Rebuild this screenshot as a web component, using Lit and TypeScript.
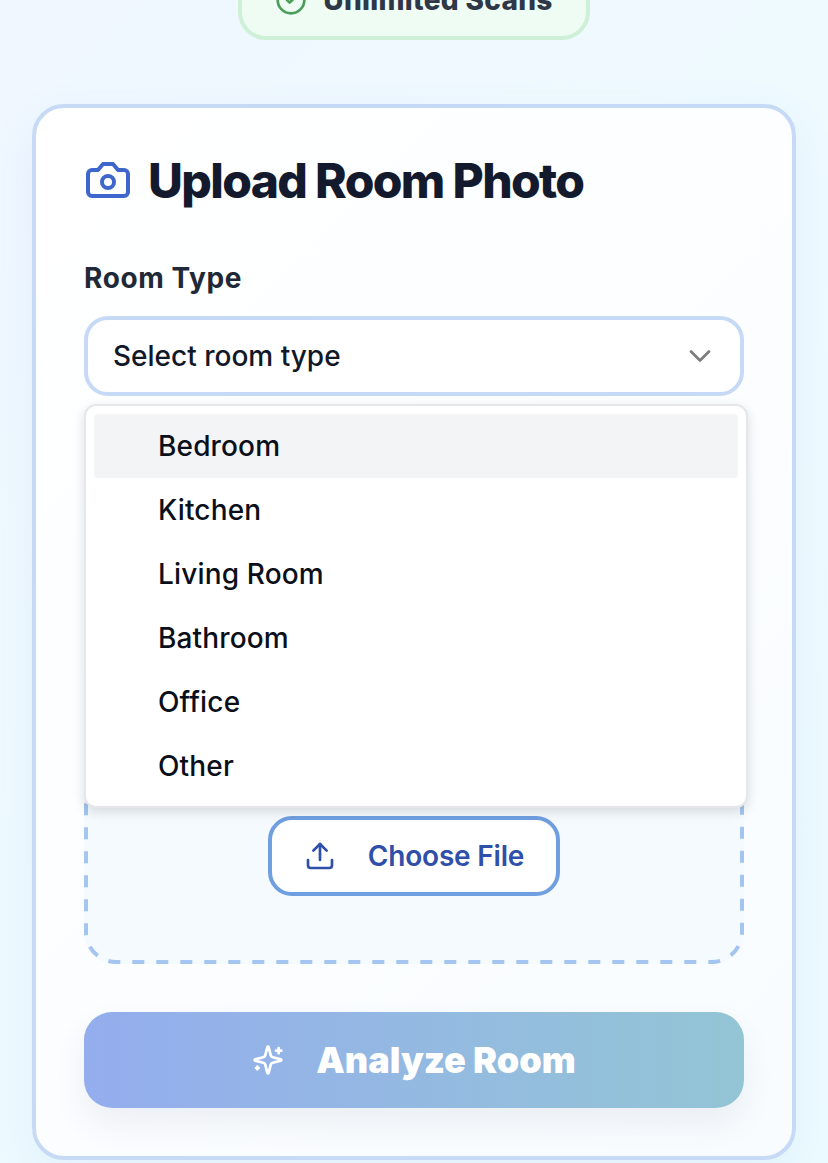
import { LitElement, html, css } from "lit";
import { customElement } from "lit/decorators.js";

const ITEMS = ["Bedroom", "Kitchen", "Living Room", "Bathroom", "Office", "Other"];

@customElement("app-root")
export class AppRoot extends LitElement {
  static styles = css`
    :host {
      display: block;
      height: 1163px;
      overflow: hidden;
      font-family: Inter, "Liberation Sans", sans-serif;
      background: linear-gradient(135deg, #f0f7ff 0%, #eefaff 50%, #ecfbff 100%);
    }
    * { box-sizing: border-box; }
    .page {
      display: flex;
      flex-direction: column;
      align-items: center;
      padding: 0 32px;
    }
    .badge {
      margin-top: -40px;
      width: 352px;
      height: 80px;
      border: 4px solid #cdf0d6;
      border-radius: 28px;
      background: #effcf4;
      display: flex;
      align-items: center;
      justify-content: center;
      gap: 16px;
      color: #2d3748;
      font-size: 28px;
      font-weight: 800;
      letter-spacing: 0.3px;
    }
    .badge svg { width: 32px; height: 32px; flex: none; }
    .card {
      position: relative;
      margin-top: 64px;
      width: 764px;
      height: 1056px;
      border: 4px solid #c7daf5;
      border-radius: 32px;
      background: linear-gradient(135deg, #ffffff 0%, #f8fcff 100%);
      padding: 44px 48px 0;
      box-shadow: 0 16px 48px rgba(90, 130, 200, 0.08);
      display: flex;
      flex-direction: column;
    }
    .card > * { flex: none; }
    .title {
      display: flex;
      align-items: center;
      gap: 16px;
      height: 56px;
      margin: 0;
      color: #141a2e;
      font-size: 48px;
      font-weight: 800;
      letter-spacing: -1.65px;
    }
    .title svg { width: 48px; height: 48px; flex: none; }
    .label {
      margin-top: 54px;
      height: 32px;
      line-height: 32px;
      color: #1f2937;
      font-size: 28px;
      font-weight: 700;
      letter-spacing: 0.6px;
    }
    .select {
      margin-top: 22px;
      height: 80px;
      border: 4px solid #c7daf5;
      border-radius: 24px;
      background: #ffffff;
      display: flex;
      align-items: center;
      justify-content: space-between;
      padding: 0 22px 0 25px;
      color: #111827;
      font-size: 28px;
      font-weight: 500;
    }
    .select svg { width: 36px; height: 36px; }
    .menu {
      position: absolute;
      left: 48px;
      top: 296px;
      width: 664px;
      height: 404px;
      z-index: 2;
      padding: 8px;
      background: #ffffff;
      border: 2px solid #e5e7eb;
      border-radius: 12px;
      box-shadow: 0 4px 12px rgba(0, 0, 0, 0.13);
    }
    .item {
      height: 64px;
      display: flex;
      align-items: center;
      padding-left: 64px;
      border-radius: 4px;
      color: #0b0f19;
      font-size: 28px;
      font-weight: 500;
      letter-spacing: 0.15px;
    }
    .item.on { background: #f3f4f6; }
    .drop {
      position: relative;
      margin-top: 38px;
      height: 530px;
      border-radius: 32px;
      background: #f5faff;
      display: flex;
      flex-direction: column;
      justify-content: flex-end;
      align-items: center;
      padding-bottom: 68px;
    }
    .dash {
      position: absolute;
      inset: 0;
      width: 100%;
      height: 100%;
    }
    .choose {
      position: relative;
      width: 292px;
      height: 80px;
      border: 4px solid #6f9fe0;
      border-radius: 24px;
      background: #ffffff;
      color: #2f4fa8;
      font-size: 28px;
      font-weight: 600;
      letter-spacing: -0.2px;
      display: flex;
      align-items: center;
      justify-content: center;
      gap: 32px;
    }
    .choose svg { width: 32px; height: 32px; flex: none; }
    .analyze {
      margin-top: 48px;
      height: 96px;
      border-radius: 28px;
      background: linear-gradient(90deg, #94adee 0%, #93c5d5 100%);
      box-shadow: 0 16px 32px rgba(60, 80, 120, 0.08);
      color: #ffffff;
      font-size: 36px;
      font-weight: 900;
      display: flex;
      align-items: center;
      justify-content: center;
      gap: 32px;
    }
    .analyze svg { width: 32px; height: 32px; flex: none; }
  `;

  render() {
    return html`
      <div class="page">
        <div class="badge">
          <svg viewBox="0 0 24 24" fill="none" stroke="#4a9d5b" stroke-width="2" stroke-linecap="round" stroke-linejoin="round">
            <circle cx="12" cy="12" r="10"></circle>
            <path d="m9 12 2 2 4-4"></path>
          </svg>
          <span>Unlimited Scans</span>
        </div>
        <div class="card">
          <h2 class="title">
            <svg viewBox="0 0 24 24" fill="none" stroke="#3f66cc" stroke-width="2" stroke-linecap="round" stroke-linejoin="round">
              <path d="M14.5 4h-5L7 7H4a2 2 0 0 0-2 2v9a2 2 0 0 0 2 2h16a2 2 0 0 0 2-2V9a2 2 0 0 0-2-2h-3l-2.5-3z"></path>
              <circle cx="12" cy="13" r="3"></circle>
            </svg>
            <span>Upload Room Photo</span>
          </h2>
          <div class="label">Room Type</div>
          <div class="select">
            <span>Select room type</span>
            <svg viewBox="0 0 24 24" fill="none" stroke="#7c7c7c" stroke-width="1.8" stroke-linecap="round" stroke-linejoin="round">
              <path d="m6 9 6 6 6-6"></path>
            </svg>
          </div>
          <div class="menu">
            ${ITEMS.map((t, i) => html`<div class="item ${i === 0 ? "on" : ""}">${t}</div>`)}
          </div>
          <div class="drop">
            <svg class="dash" fill="none">
              <rect x="2" y="2" width="656" height="526" rx="30" ry="30" stroke="#a3c5ef" stroke-width="4" stroke-dasharray="12 12" stroke-dashoffset="4.2"></rect>
            </svg>
            <div class="choose">
              <svg viewBox="0 0 24 24" fill="none" stroke="#2f4fa8" stroke-width="2" stroke-linecap="round" stroke-linejoin="round">
                <path d="M21 15v4a2 2 0 0 1-2 2H5a2 2 0 0 1-2-2v-4"></path>
                <path d="m17 8-5-5-5 5"></path>
                <path d="M12 3v12"></path>
              </svg>
              <span>Choose File</span>
            </div>
          </div>
          <div class="analyze">
            <svg viewBox="0 0 24 24" fill="none" stroke="#ffffff" stroke-width="2" stroke-linecap="round" stroke-linejoin="round">
              <path d="M9.94 15.5A2 2 0 0 0 8.5 14.06l-6.14-1.58a.5.5 0 0 1 0-.96L8.5 9.94A2 2 0 0 0 9.94 8.5l1.58-6.14a.5.5 0 0 1 .96 0L14.06 8.5A2 2 0 0 0 15.5 9.94l6.14 1.58a.5.5 0 0 1 0 .96L15.5 14.06a2 2 0 0 0-1.44 1.44l-1.58 6.14a.5.5 0 0 1-.96 0z"></path>
              <path d="M20 3v4"></path>
              <path d="M22 5h-4"></path>
              <path d="M4 17v2"></path>
              <path d="M5 18H3"></path>
            </svg>
            <span>Analyze Room</span>
          </div>
        </div>
      </div>
    `;
  }
}
